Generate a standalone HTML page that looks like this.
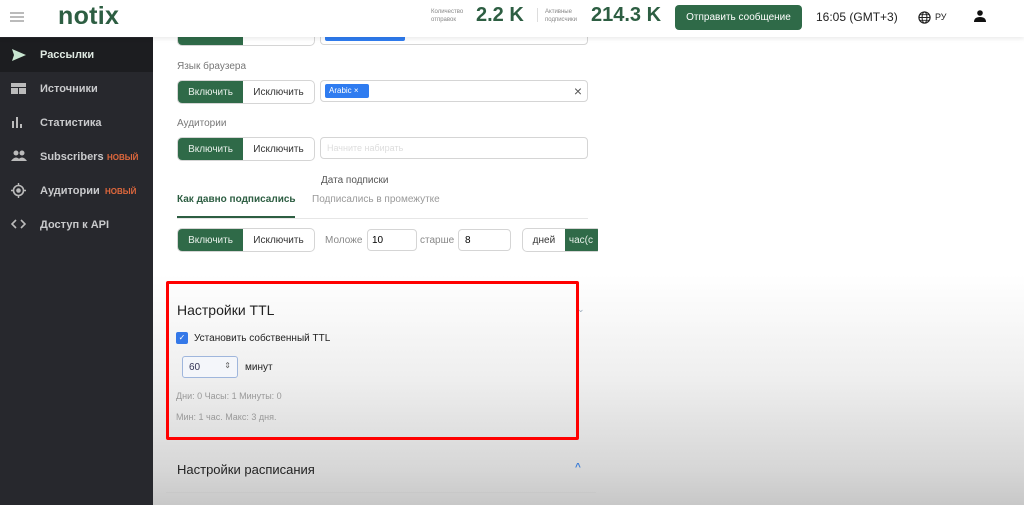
<!DOCTYPE html>
<html><head><meta charset="utf-8"><style>
*{box-sizing:border-box;margin:0;padding:0}
body{width:1024px;height:505px;overflow:hidden;font-family:"Liberation Sans",sans-serif;position:relative;background:linear-gradient(#fff 0,#fff 275px,#eeeeee 380px,#d6d6d6 470px,#c8c8c8 505px)}
.abs{position:absolute}
#side{left:0;top:37px;width:153px;height:468px;background:#27282d}
.si{position:absolute;left:0;width:153px;height:34px;color:#c9cacc;font-size:11px;font-weight:bold}
.si span.t{position:absolute;left:40px;top:11px}
.si svg{position:absolute;left:11px;top:10px}
.new{position:absolute;font-size:8px;color:#e0683c;font-weight:bold;top:13px}
#hdr{left:0;top:0;width:1024px;height:37px;background:#fff;box-shadow:0 2px 4px rgba(0,0,0,.08)}
.btn2{position:absolute;height:24px;border:1px solid #d5d5d5;border-radius:5px;overflow:hidden;font-size:10px;display:flex;background:#fff}
.btn2 .g{width:65px;background:#2f6a48;color:#e8f0ea;display:flex;align-items:center;justify-content:center}
.btn2 .w{width:71px;color:#333;display:flex;align-items:center;justify-content:center}
.inp{position:absolute;border:1px solid #d5d5d5;border-radius:4px;background:#fff}
.lbl{position:absolute;font-size:10px;color:#777}
</style></head><body>
<div class="abs" id="side">
 <div class="si" style="top:1px;background:#1c1d20;color:#dfe9e2"><svg width="16" height="14" viewBox="0 0 16 14"><path d="M1 1 L15 7 L1 13 L3 7 Z" fill="#c8e6d0"/></svg><span class="t">Рассылки</span></div>
 <div class="si" style="top:35px"><svg width="15" height="13" viewBox="0 0 15 13"><rect x="0" y="1" width="15" height="4" fill="#bbb"/><rect x="0" y="6" width="7" height="6" fill="#bbb"/><rect x="8" y="6" width="7" height="6" fill="#bbb"/></svg><span class="t">Источники</span></div>
 <div class="si" style="top:69px"><svg width="14" height="12" viewBox="0 0 14 12"><rect x="1" y="5" width="2" height="7" fill="#bbb"/><rect x="5" y="1" width="2" height="11" fill="#bbb"/><rect x="9" y="8" width="2" height="4" fill="#bbb"/></svg><span class="t">Статистика</span></div>
 <div class="si" style="top:103px"><svg width="16" height="12" viewBox="0 0 16 12"><circle cx="5" cy="3" r="2.5" fill="#bbb"/><circle cx="11" cy="3" r="2.5" fill="#bbb"/><path d="M0 11 Q5 4 10 11Z M6 11 Q11 4 16 11Z" fill="#bbb"/></svg><span class="t">Subscribers</span><span class="new" style="left:107px">НОВЫЙ</span></div>
 <div class="si" style="top:137px"><svg width="15" height="15" viewBox="0 0 15 15" style="top:9px"><circle cx="7.5" cy="7.5" r="5" fill="none" stroke="#bbb" stroke-width="1.6"/><circle cx="7.5" cy="7.5" r="2.3" fill="#bbb"/><path d="M7.5 0v2.5M7.5 12.5V15M0 7.5h2.5M12.5 7.5H15" stroke="#bbb" stroke-width="1.4"/></svg><span class="t">Аудитории</span><span class="new" style="left:105px">НОВЫЙ</span></div>
 <div class="si" style="top:171px"><svg width="15" height="12" viewBox="0 0 15 12"><path d="M5 2 L1 6 L5 10 M10 2 L14 6 L10 10" fill="none" stroke="#bbb" stroke-width="1.6"/></svg><span class="t">Доступ к API</span></div>
</div>

<div class="btn2" style="left:177px;top:22px"><div class="g"></div><div class="w"></div></div>
<div class="inp" style="left:320px;top:22px;width:268px;height:23px"><div class="abs" style="left:4px;top:11px;width:80px;height:7px;background:#2f7cf0;border-radius:2px"></div></div>

<div class="abs" id="hdr">
 <div class="abs" style="left:10px;top:12px;width:14px;height:10px;border-top:2px solid #bbb;border-bottom:2px solid #bbb"><div style="margin-top:2px;height:2px;background:#bbb"></div></div>
 <div class="abs" style="left:58px;top:2px;font-size:25px;font-weight:bold;color:#2d5e42;letter-spacing:0.3px">notix</div>
 <div class="abs" style="left:431px;top:8px;font-size:6px;color:#888;line-height:8px">Количество<br>отправок</div>
 <div class="abs" style="left:476px;top:4px;font-size:20px;font-weight:bold;color:#2d5e42">2.2 K</div>
 <div class="abs" style="left:537px;top:8px;width:1px;height:14px;background:#ddd"></div>
 <div class="abs" style="left:545px;top:8px;font-size:6px;color:#888;line-height:8px">Активные<br>подписчики</div>
 <div class="abs" style="left:591px;top:4px;font-size:20px;font-weight:bold;color:#2d5e42">214.3 K</div>
 <div class="abs" style="left:675px;top:5px;width:127px;height:25px;background:#2f6a48;border-radius:4px;color:#fff;font-size:10px;text-align:center;line-height:25px">Отправить сообщение</div>
 <div class="abs" style="left:816px;top:10px;font-size:12px;color:#222">16:05 (GMT+3)</div>
 <svg class="abs" style="left:918px;top:11px" width="13" height="13" viewBox="0 0 14 14"><circle cx="7" cy="7" r="6" fill="none" stroke="#222" stroke-width="1.3"/><ellipse cx="7" cy="7" rx="2.6" ry="6" fill="none" stroke="#222" stroke-width="1.1"/><path d="M1 7h12M2 4h10M2 10h10" stroke="#222" stroke-width="1"/></svg>
 <div class="abs" style="left:935px;top:12px;font-size:9px;color:#222">РУ</div>
 <svg class="abs" style="left:974px;top:10px" width="12" height="12" viewBox="0 0 12 12"><circle cx="6" cy="3" r="2.8" fill="#111"/><path d="M0 12 Q0 7 6 7 Q12 7 12 12Z" fill="#111"/></svg>
</div>

<div class="lbl" style="left:177px;top:61px">Язык браузера</div>
<div class="btn2" style="left:177px;top:80px"><div class="g">Включить</div><div class="w">Исключить</div></div>
<div class="inp" style="left:320px;top:80px;width:268px;height:22px"><div class="abs" style="left:4px;top:3px;width:44px;height:14px;background:#2f7cf0;border-radius:2px;color:#fff;font-size:8px;line-height:14px;padding-left:4px">Arabic ×</div><div class="abs" style="right:5px;top:2px;font-size:14px;color:#555">×</div></div>

<div class="lbl" style="left:177px;top:118px">Аудитории</div>
<div class="btn2" style="left:177px;top:137px"><div class="g">Включить</div><div class="w">Исключить</div></div>
<div class="inp" style="left:320px;top:137px;width:268px;height:22px"><div class="abs" style="left:6px;top:5px;font-size:9px;color:#ddd">Начните набирать</div></div>

<div class="lbl" style="left:321px;top:175px;color:#555">Дата подписки</div>
<div class="abs" style="left:177px;top:194px;font-size:10px;font-weight:bold;color:#2d5e42">Как давно подписались</div>
<div class="abs" style="left:312px;top:194px;font-size:10px;color:#999">Подписались в промежутке</div>
<div class="abs" style="left:177px;top:218px;width:411px;height:1px;background:#e6e6e6"></div>
<div class="abs" style="left:177px;top:216px;width:118px;height:2px;background:#2d5e42"></div>

<div class="btn2" style="left:177px;top:228px"><div class="g">Включить</div><div class="w">Исключить</div></div>
<div class="lbl" style="left:325px;top:235px;color:#888">Моложе</div>
<div class="inp" style="left:367px;top:229px;width:50px;height:22px;font-size:10px;padding:5px 4px">10</div>
<div class="lbl" style="left:420px;top:235px;color:#888">старше</div>
<div class="inp" style="left:458px;top:229px;width:53px;height:22px;font-size:10px;padding:5px 6px">8</div>
<div class="btn2" style="left:522px;top:228px;width:80px"><div class="w" style="width:43px">дней</div><div class="g" style="width:37px;justify-content:flex-start;padding-left:4px">час(с</div></div>
<div class="abs" style="left:598px;top:220px;width:30px;height:40px;background:#fff"></div>

<div class="abs" style="left:166px;top:281px;width:413px;height:159px;border:3px solid #f00;border-radius:2px"></div>
<div class="abs" style="left:177px;top:302px;font-size:14px;color:#222">Настройки TTL</div>
<div class="abs" style="left:577px;top:304px;font-size:9px;color:#9ab">⌄</div>
<div class="abs" style="left:176px;top:332px;width:12px;height:12px;background:#3478e8;border-radius:2px;color:#fff;font-size:8px;text-align:center;line-height:12px">✓</div>
<div class="abs" style="left:194px;top:333px;font-size:10px;color:#222">Установить собственный TTL</div>
<div class="abs" style="left:182px;top:356px;width:56px;height:22px;border:1px solid #9fb6dc;border-radius:3px;background:#f4f6fa;font-size:10px;padding:5px 6px;color:#335">60<span style="position:absolute;right:6px;top:4px;font-size:8px;color:#666">⇕</span></div>
<div class="abs" style="left:245px;top:362px;font-size:10px;color:#222">минут</div>
<div class="abs" style="left:176px;top:391px;font-size:9px;color:#999">Дни: 0 Часы: 1 Минуты: 0</div>
<div class="abs" style="left:176px;top:412px;font-size:9px;color:#999">Мин: 1 час. Макс: 3 дня.</div>

<div class="abs" style="left:177px;top:462px;font-size:13px;color:#222">Настройки расписания</div>
<div class="abs" style="left:575px;top:462px;font-size:10px;color:#3a7bd5;font-weight:bold">^</div>
<div class="abs" style="left:166px;top:492px;width:430px;height:1px;background:#c8c8c8"></div>
</body></html>
